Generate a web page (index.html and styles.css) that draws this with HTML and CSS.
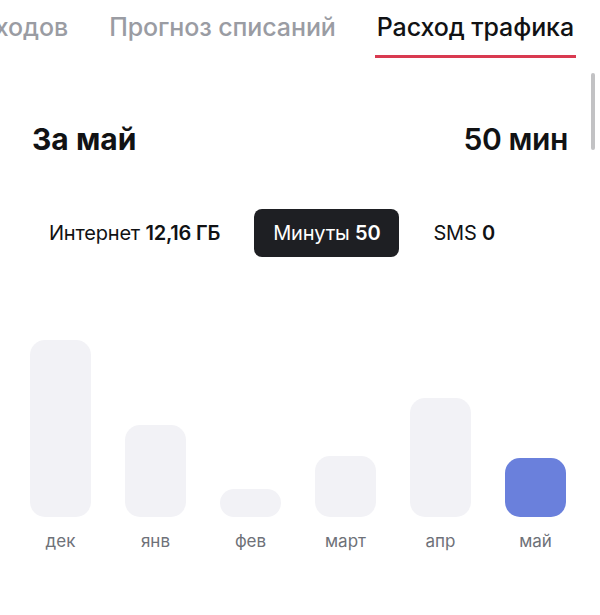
FILE: index.html
```html
<!DOCTYPE html>
<html lang="ru">
<head>
<meta charset="utf-8">
<link rel="stylesheet" href="styles.css">
</head>
<body>
<div class="page">
  <nav class="tabs">
    <span class="tab">Анализ расходов</span>
    <span class="tab">Прогноз списаний</span>
    <span class="tab active">Расход трафика</span>
  </nav>
  <div class="scrollbar"></div>
  <div class="summary">
    <span>За май</span>
    <span>50 мин</span>
  </div>
  <div class="filters">
    <span class="filter">Интернет <b>12,16 ГБ</b></span>
    <span class="filter selected">Минуты <b>50</b></span>
    <span class="filter">SMS <b>0</b></span>
  </div>
  <div class="chart">
    <div class="col"><div class="bars"><div class="bar" style="height:177px"></div></div><span class="label">дек</span></div>
    <div class="col"><div class="bars"><div class="bar" style="height:92px"></div></div><span class="label">янв</span></div>
    <div class="col"><div class="bars"><div class="bar" style="height:28px"></div></div><span class="label">фев</span></div>
    <div class="col"><div class="bars"><div class="bar" style="height:61px"></div></div><span class="label">март</span></div>
    <div class="col"><div class="bars"><div class="bar" style="height:119px"></div></div><span class="label">апр</span></div>
    <div class="col"><div class="bars"><div class="bar current" style="height:59px"></div></div><span class="label">май</span></div>
  </div>
</div>
</body>
</html>
```
FILE: styles.css
```css
* { box-sizing: border-box; }
html, body { margin: 0; padding: 0; background: #fff; }
body { font-family: Inter, "Noto Sans", sans-serif; color: #111214; }
.page { position: relative; width: 600px; height: 615px; overflow: hidden; }

.tabs {
  display: flex;
  justify-content: flex-end;
  gap: 37px;
  padding: 11px 24px 0 0;
  overflow: hidden;
  white-space: nowrap;
  height: 58px;
}
.tab {
  flex: none;
  font-size: 25px;
  font-weight: 500;
  line-height: 32px;
  color: #9a9ca3;
  letter-spacing: -0.1px;
  padding: 0 2px;
}
.tab.active {
  color: #111214;
  border-bottom: 3px solid #d93a50;
  padding-bottom: 10px;
}

.scrollbar {
  position: absolute;
  right: 5px;
  top: 73px;
  width: 4px;
  height: 77px;
  border-radius: 2px;
  background: #c2c2c4;
}

.summary {
  display: flex;
  justify-content: space-between;
  padding: 63px 32px 0 32px;
  font-size: 30px;
  font-weight: 700;
  line-height: 36px;
  letter-spacing: 0;
}
.summary span:last-child { font-weight: 600; letter-spacing: -0.4px; }

.filters {
  display: flex;
  align-items: center;
  gap: 34px;
  padding: 52px 0 0 49px;
  font-size: 20px;
  line-height: 24px;
  letter-spacing: -0.2px;
}
.filter b { font-weight: 600; }
.filter.selected {
  background: #1e1f23;
  color: #fff;
  border-radius: 8px;
  padding: 12px 19px;
  height: 48px;
}

.chart {
  display: flex;
  gap: 34px;
  padding: 0 0 0 30px;
  margin-top: 83px;
}
.col {
  display: flex;
  flex-direction: column;
  align-items: center;
  width: 61px;
}
.bars {
  height: 177px;
  width: 61px;
  display: flex;
  align-items: flex-end;
}
.bar {
  width: 61px;
  border-radius: 15px;
  background: #f2f2f6;
}
.bar.current { background: #6a80dc; }
.label {
  margin-top: 13px;
  font-size: 17px;
  line-height: 22px;
  color: #6e7178;
  font-weight: 400;
}
```
